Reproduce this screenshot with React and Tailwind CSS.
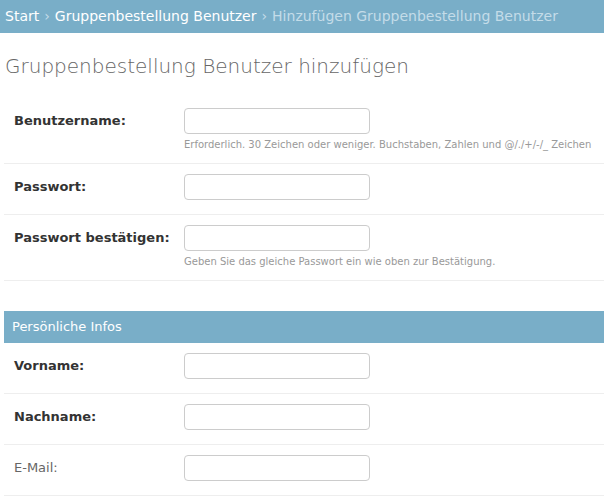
export default function App() {
  const Input = () => <div className="shrink-0 w-[186px] h-[26px] border border-[#cccccc] rounded-[4px] bg-white"></div>;
  const Label = ({ children, bold = true }) => (
    <div className={`shrink-0 w-[180px] pl-[10px] h-[26px] flex items-center text-[13px] ${bold ? "font-bold text-[#333]" : "text-[#666]"}`}>{children}</div>
  );
  const Help = ({ children }) => (
    <div className="mt-[5px] leading-[11px] text-[10px] text-[#999] whitespace-nowrap">{children}</div>
  );
  return (
    <div className="w-[604px] h-[498px] overflow-hidden bg-white" style={{ fontFamily: '"DejaVu Sans", sans-serif' }}>
      <div className="h-[33px] bg-[#79aec8] flex items-center px-[5px] text-[14px] text-white whitespace-nowrap">
        <span>Start</span><span className="text-[#c4dce8] mx-[5px]">›</span>
        <span>Gruppenbestellung Benutzer</span><span className="text-[#c4dce8] mx-[5px]">›</span>
        <span className="text-[#c4dce8]">Hinzufügen Gruppenbestellung Benutzer</span>
      </div>
      <h1 className="mt-[20px] mb-[19px] px-[5px] text-[20px] leading-[26px] font-light text-[#666]">Gruppenbestellung Benutzer hinzufügen</h1>
      <div className="pl-[4px]">
        <div className="flex border-b border-[#eeeeee] pt-[10px] pb-[13px]">
          <Label>Benutzername:</Label>
          <div className="flex flex-col">
            <Input />
            <Help>Erforderlich. 30 Zeichen oder weniger. Buchstaben, Zahlen und @/./+/-/_ Zeichen</Help>
          </div>
        </div>
        <div className="flex border-b border-[#eeeeee] pt-[10px] pb-[14px]">
          <Label>Passwort:</Label>
          <Input />
        </div>
        <div className="flex border-b border-[#eeeeee] pt-[10px] pb-[13px]">
          <Label>Passwort bestätigen:</Label>
          <div className="flex flex-col">
            <Input />
            <Help>Geben Sie das gleiche Passwort ein wie oben zur Bestätigung.</Help>
          </div>
        </div>
        <div className="mt-[30px] h-[32px] bg-[#79aec8] text-white text-[13px] flex items-center px-[8px]">Persönliche Infos</div>
        {[["Vorname:", true], ["Nachname:", true], ["E-Mail:", false]].map(([l, b]) => (
          <div key={l} className="flex border-b border-[#eeeeee] pt-[10px] pb-[14px]">
            <Label bold={b}>{l}</Label>
            <Input />
          </div>
        ))}
      </div>
    </div>
  );
}
